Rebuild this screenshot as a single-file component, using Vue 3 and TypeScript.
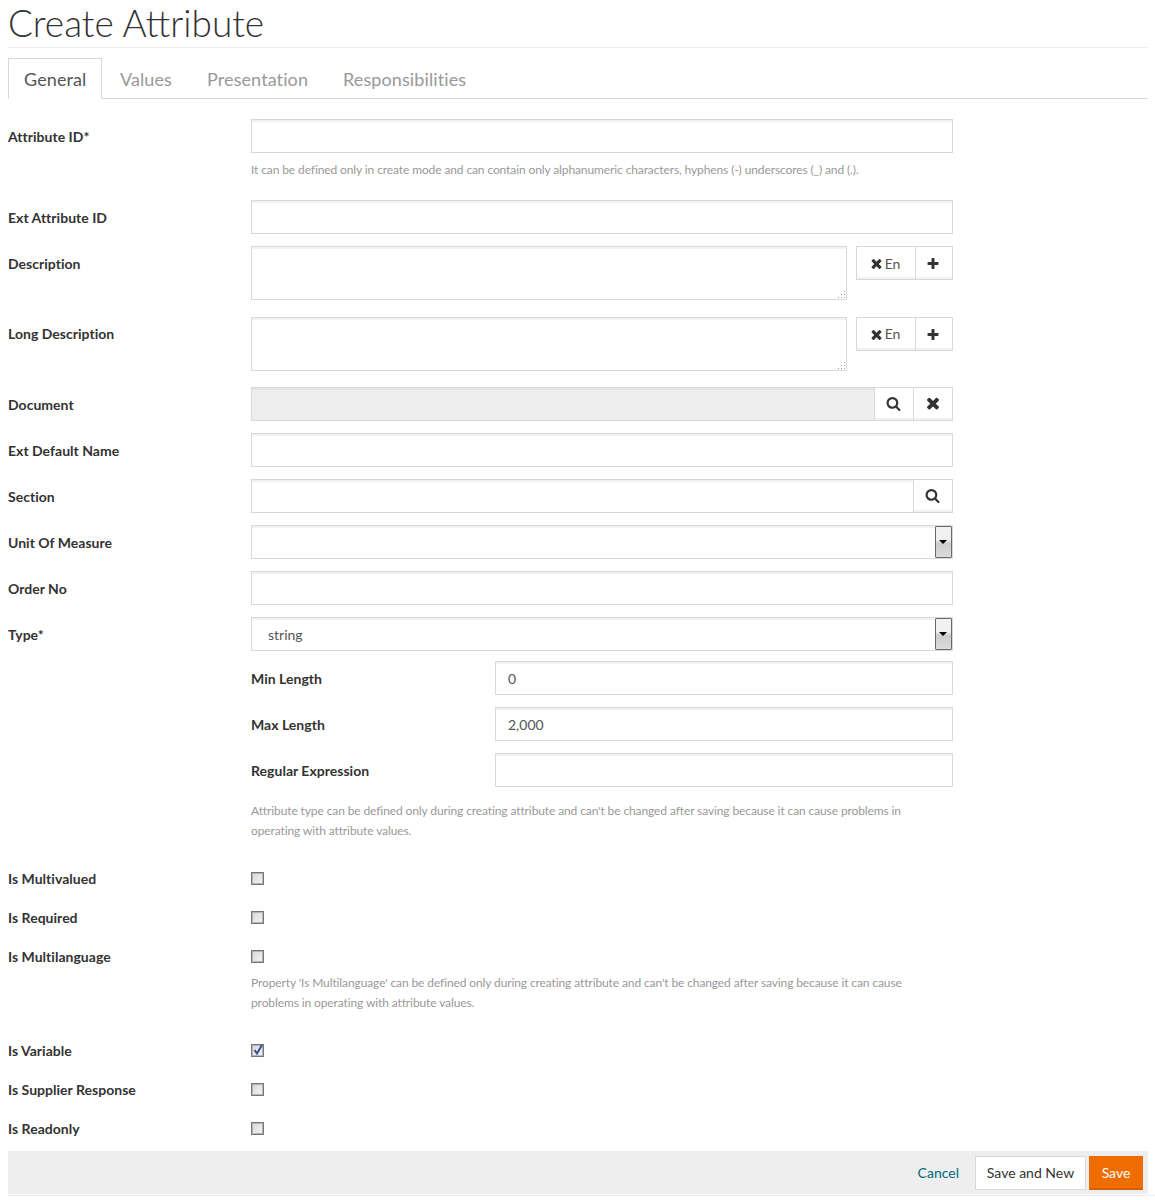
<script setup lang="ts">
const tabs: string[] = ['General', 'Values', 'Presentation', 'Responsibilities']
const searchPath = 'M1216 832q0-185-131.5-316.5t-316.5-131.5-316.5 131.5-131.5 316.5 131.5 316.5 316.5 131.5 316.5-131.5 131.5-316.5zm512 832q0 52-38 90t-90 38q-54 0-90-38l-343-342q-179 124-399 124-143 0-273.5-55.5t-225-150-150-225-55.5-273.5 55.5-273.5 150-225 225-150 273.5-55.5 273.5 55.5 225 150 150 225 55.5 273.5q0 220-124 399l343 343q37 37 37 90z'
const timesPath = 'M1490 1322q0 40-28 68l-136 136q-28 28-68 28t-68-28l-294-294-294 294q-28 28-68 28t-68-28l-136-136q-28-28-28-68t28-68l294-294-294-294q-28-28-28-68t28-68l136-136q28-28 68-28t68 28l294 294 294-294q28-28 68-28t68 28l136 136q28 28 28 68t-28 68l-294 294 294 294q28 28 28 68z'
const plusPath = 'M1600 736v192q0 40-28 68t-68 28h-416v416q0 40-28 68t-68 28h-192q-40 0-68-28t-28-68v-416h-416q-40 0-68-28t-28-68v-192q0-40 28-68t68-28h416v-416q0-40 28-68t68-28h192q40 0 68 28t28 68v416h416q40 0 68 28t28 68z'
const descriptions: string[] = ['Description', 'Long Description']
</script>

<template>
  <div class="page">
    <h1 class="title">Create Attribute</h1>
    <nav class="tabs">
      <a v-for="(t, i) in tabs" :key="t" class="tab" :class="{ active: i === 0 }">{{ t }}</a>
    </nav>

    <form class="form">
      <div class="row">
        <label class="label">Attribute ID*</label>
        <div class="control"><input class="input" type="text" /></div>
      </div>
      <p class="help help-first">It can be defined only in create mode and can contain only alphanumeric characters, hyphens (-) underscores (_) and (.).</p>

      <div class="row">
        <label class="label">Ext Attribute ID</label>
        <div class="control"><input class="input" type="text" /></div>
      </div>

      <div v-for="d in descriptions" :key="d" class="row row-text">
        <label class="label">{{ d }}</label>
        <div class="control text-wrap">
          <div class="textarea">
            <svg class="grip" width="9" height="9" viewBox="0 0 9 9">
              <g fill="#999">
                <rect x="7" y="1" width="1" height="1" /><rect x="4" y="4" width="1" height="1" /><rect x="7" y="4" width="1" height="1" />
                <rect x="1" y="7" width="1" height="1" /><rect x="4" y="7" width="1" height="1" /><rect x="7" y="7" width="1" height="1" />
              </g>
            </svg>
          </div>
          <div class="lang-group">
            <button type="button" class="btn btn-lang">
              <svg class="ic" viewBox="0 0 1792 1792" width="15" height="15"><path :d="timesPath" /></svg>
              <span>En</span>
            </button>
            <button type="button" class="btn btn-add">
              <svg class="ic" viewBox="0 0 1792 1792" width="14" height="14"><path :d="plusPath" /></svg>
            </button>
          </div>
        </div>
      </div>

      <div class="row">
        <label class="label">Document</label>
        <div class="control group">
          <input class="input input-disabled" type="text" disabled />
          <button type="button" class="btn btn-addon">
            <svg class="ic" viewBox="0 0 1792 1792" width="15" height="15"><path :d="searchPath" /></svg>
          </button>
          <button type="button" class="btn btn-addon">
            <svg class="ic" viewBox="0 0 1792 1792" width="18" height="18"><path :d="timesPath" /></svg>
          </button>
        </div>
      </div>

      <div class="row">
        <label class="label">Ext Default Name</label>
        <div class="control"><input class="input" type="text" /></div>
      </div>

      <div class="row">
        <label class="label">Section</label>
        <div class="control group">
          <input class="input" type="text" />
          <button type="button" class="btn btn-addon">
            <svg class="ic" viewBox="0 0 1792 1792" width="15" height="15"><path :d="searchPath" /></svg>
          </button>
        </div>
      </div>

      <div class="row">
        <label class="label">Unit Of Measure</label>
        <div class="control">
          <div class="select"><span class="select-value"></span><span class="select-arrow"><i></i></span></div>
        </div>
      </div>

      <div class="row">
        <label class="label">Order No</label>
        <div class="control"><input class="input" type="text" /></div>
      </div>

      <div class="row row-type">
        <label class="label">Type*</label>
        <div class="control">
          <div class="select"><span class="select-value">string</span><span class="select-arrow"><i></i></span></div>
        </div>
      </div>

      <div class="nested">
        <div class="row">
          <label class="label label-nested">Min Length</label>
          <div class="control"><input class="input" type="text" value="0" /></div>
        </div>
        <div class="row">
          <label class="label label-nested">Max Length</label>
          <div class="control"><input class="input" type="text" value="2,000" /></div>
        </div>
        <div class="row row-last">
          <label class="label label-nested">Regular Expression</label>
          <div class="control"><input class="input" type="text" /></div>
        </div>
      </div>
      <p class="help help-type">Attribute type can be defined only during creating attribute and can't be changed after saving because it can cause problems in operating with attribute values.</p>

      <div class="check-row">
        <label class="label">Is Multivalued</label>
        <input class="check" type="checkbox" />
      </div>
      <div class="check-row">
        <label class="label">Is Required</label>
        <input class="check" type="checkbox" />
      </div>
      <div class="check-row">
        <label class="label">Is Multilanguage</label>
        <input class="check" type="checkbox" />
      </div>
      <p class="help help-lang">Property 'Is Multilanguage' can be defined only during creating attribute and can't be changed after saving because it can cause problems in operating with attribute values.</p>
      <div class="check-row">
        <label class="label">Is Variable</label>
        <span class="check-on">
          <input class="check" type="checkbox" checked />
          <svg class="tick" width="10" height="11" viewBox="0 0 10 11"><path d="M1.5 6 L4 9.5 L9 1" fill="none" stroke="#36509c" stroke-width="2" /></svg>
        </span>
      </div>
      <div class="check-row">
        <label class="label">Is Supplier Response</label>
        <input class="check" type="checkbox" />
      </div>
      <div class="check-row">
        <label class="label">Is Readonly</label>
        <input class="check" type="checkbox" />
      </div>
    </form>

    <footer class="footer">
      <a class="cancel">Cancel</a>
      <button type="button" class="btn-foot">Save and New</button>
      <button type="button" class="btn-save">Save</button>
    </footer>
    <div class="footer-rule"></div>
  </div>
</template>

<style>
html, body { margin: 0; background: #fff; }
</style>

<style scoped>
.page {
  box-sizing: border-box;
  width: 1155px;
  height: 1200px;
  padding: 0 7px 0 8px;
  font-family: Lato, "Noto Sans", sans-serif;
  font-size: 14px;
  line-height: 20px;
  color: #555;
  overflow: hidden;
}
.title {
  margin: 0;
  height: 47px;
  line-height: 45px;
  font-size: 37px;
  font-weight: 300;
  color: #333;
  border-bottom: 1px solid #eee;
}
.tabs {
  display: flex;
  height: 40px;
  margin-top: 10px;
  border-bottom: 1px solid #d5dbdd;
}
.tab {
  box-sizing: border-box;
  height: 41px;
  padding: 0 15px;
  margin-right: 3px;
  line-height: 40px;
  font-size: 18px;
  letter-spacing: 0.1px;
  color: #999;
  border: 1px solid transparent;
  border-bottom: 0;
}
.tab.active {
  color: #555;
  background: #fff;
  border-color: #d5dbdd;
  margin-right: 2px;
  width: 94px;
}
.form { padding-top: 20px; }
.row {
  display: flex;
  margin-bottom: 12px;
}
.label {
  flex: 0 0 243px;
  font-weight: 700;
  font-size: 14px;
  line-height: 20px;
  padding-top: 8px;
  letter-spacing: 0.02px;
  color: #333;
}
.control { flex: 0 0 702px; min-width: 0; }
.input {
  display: block;
  box-sizing: border-box;
  width: 100%;
  height: 34px;
  padding: 0 12px;
  font: inherit;
  color: #555;
  background: #fff;
  border: 1px solid #d5dbdd;
  border-radius: 0;
  box-shadow: inset 0 2px 0 #f2f2f2;
  outline: none;
}
.input-disabled { background: #eee; box-shadow: inset 0 2px 0 #e4e4e4; }
.help {
  margin: 0;
  padding-left: 243px;
  width: 660px;
  font-size: 12px;
  line-height: 20px;
  letter-spacing: -0.11px;
  color: #999;
}
.help-first { margin-top: -5px; margin-bottom: 20px; }
.row-text { margin-bottom: 17px; }
.row-text + .row-text { margin-bottom: 16px; }
.row-text + .row-text .label { padding-top: 7px; }
.row-text + .row-text .btn-lang { padding-top: 0; }
.row-text + .row-text .btn-add { padding-top: 1px; }
.text-wrap { display: flex; justify-content: space-between; }
.textarea {
  position: relative;
  box-sizing: border-box;
  width: 596px;
  height: 54px;
  border: 1px solid #d5dbdd;
  box-shadow: inset 0 2px 0 #f2f2f2;
}
.grip { position: absolute; right: 0; bottom: 0; }
.lang-group { display: flex; width: 97px; height: 34px; }
.btn {
  display: flex;
  align-items: center;
  justify-content: center;
  box-sizing: border-box;
  height: 34px;
  padding: 0;
  font: inherit;
  color: #555;
  background: #fff;
  border: 1px solid #d5dbdd;
  border-radius: 0;
  box-shadow: inset 0 -2px 0 #f2f2f2;
}
.ic { display: block; fill: #333; }
.btn-lang { width: 60px; gap: 1px; padding: 1px 3px 0 0; }
.btn-add { width: 38px; margin-left: -1px; padding-top: 2px; padding-right: 3px; }
.group { display: flex; }
.group .input { flex: 1; min-width: 0; }
.btn-addon { flex: 0 0 40px; margin-left: -1px; padding: 0 1px 2px 0; }
.select {
  position: relative;
  box-sizing: border-box;
  height: 34px;
  padding-left: 16px;
  line-height: 34px;
  border: 1px solid #d5dbdd;
  box-shadow: inset 0 2px 0 #f2f2f2;
}
.select-arrow {
  position: absolute;
  top: 0;
  right: 0;
  box-sizing: border-box;
  width: 17px;
  height: 32px;
  border: 1px solid #6a6a6a;
  border-radius: 1px;
  background: linear-gradient(#f2f2f2 0, #f0f0f0 42%, #cccccc 55%, #dcdcdc 100%);
}
.select-arrow i {
  position: absolute;
  left: 3px;
  top: 13px;
  border-left: 4px solid transparent;
  border-right: 4px solid transparent;
  border-top: 4px solid #000;
}
.row-type { margin-bottom: 10px; }
.nested { padding-left: 243px; }
.nested .control { flex: 0 0 458px; }
.label-nested { flex: 0 0 244px; }
.row-last { margin-bottom: 0; }
.help-type { padding-top: 14px; margin-bottom: 0; width: 660px; }
.check-row {
  display: flex;
  align-items: center;
  height: 39px;
}
.check-row .label { padding-top: 0; }
.help-type + .check-row { margin-top: 18px; }
.check {
  appearance: none;
  -webkit-appearance: none;
  box-sizing: border-box;
  display: block;
  width: 13px;
  height: 13px;
  margin: -1px 0 0;
  border: 1px solid #777;
  outline: 1px solid #b4b4b4;
  outline-offset: -2px;
  background: linear-gradient(135deg, #d6d6d6, #f6f6f6);
}
.check-on { position: relative; display: block; }
.tick { position: absolute; left: 2px; top: -1px; }
.help-lang { margin-top: -3px; margin-bottom: 18px; width: 660px; }
.help-lang + .check-row { margin-top: 0; }
.footer {
  display: flex;
  align-items: center;
  justify-content: flex-end;
  height: 43px;
  padding-right: 5px;
  margin-top: 3px;
  background: #eee;
}
.footer-rule {
  height: 1px;
  margin: 1px -7px 0 0;
  background: #eee;
}
.cancel { color: #006a80; margin-right: 16px; }
.btn-foot {
  box-sizing: border-box;
  width: 111px;
  height: 34px;
  padding: 0;
  font: inherit;
  color: #333;
  background: #fff;
  border: 1px solid #d5dbdd;
  border-radius: 0;
}
.btn-save {
  box-sizing: border-box;
  width: 54px;
  height: 34px;
  padding: 2px 0 0;
  margin-left: 3px;
  font: inherit;
  color: #fff;
  background: #ef6c00;
  border: 0;
  border-bottom: 2px solid #d55f00;
  border-radius: 0;
}
</style>
